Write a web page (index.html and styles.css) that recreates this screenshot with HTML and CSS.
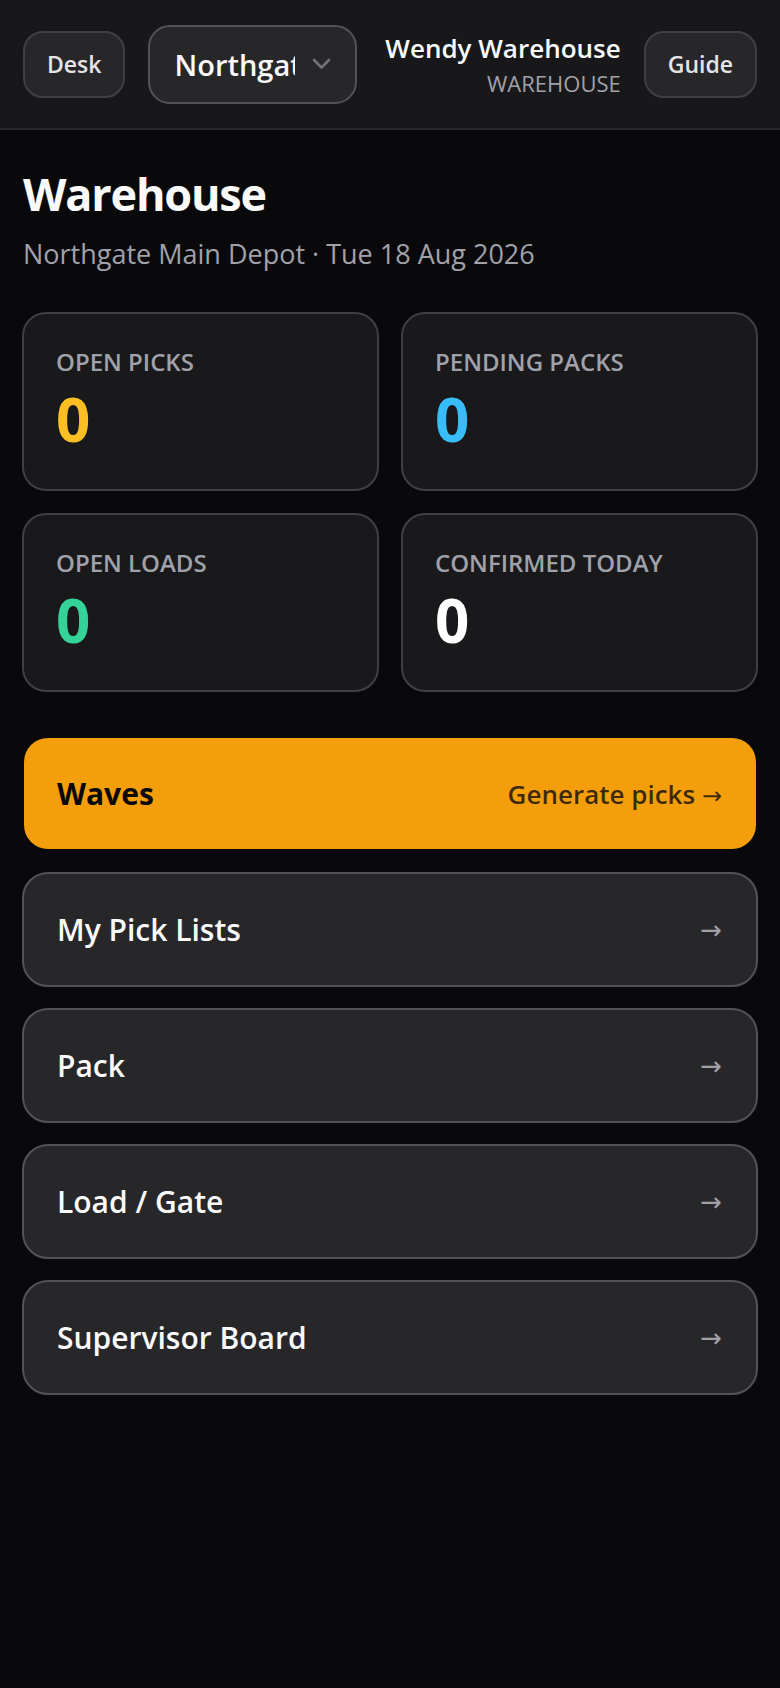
FILE: index.html
```html
<!DOCTYPE html>
<html lang="en">
<head>
<meta charset="utf-8">
<title>Warehouse</title>
<link rel="stylesheet" href="styles.css">
</head>
<body>
<header class="topbar">
  <button class="btn">Desk</button>
  <div class="site-select">
    <span class="site-text">Northgate</span>
    <svg class="chev" width="19" height="12" viewBox="0 0 19 12" fill="none"><path d="M2 2l7.5 7.5L17 2" stroke="#71717a" stroke-width="2.6" stroke-linecap="round" stroke-linejoin="round"/></svg>
  </div>
  <div class="user">
    <div class="user-name">Wendy Warehouse</div>
    <div class="user-role">WAREHOUSE</div>
  </div>
  <button class="btn">Guide</button>
</header>
<main class="page">
  <h1 class="title">Warehouse</h1>
  <p class="subtitle">Northgate Main Depot · Tue 18 Aug 2026</p>
  <section class="stats">
    <div class="stat"><div class="stat-label">OPEN PICKS</div><div class="stat-value amber">0</div></div>
    <div class="stat"><div class="stat-label">PENDING PACKS</div><div class="stat-value sky">0</div></div>
    <div class="stat"><div class="stat-label">OPEN LOADS</div><div class="stat-value green">0</div></div>
    <div class="stat"><div class="stat-label">CONFIRMED TODAY</div><div class="stat-value white">0</div></div>
  </section>
  <nav class="links">
    <a class="link link-primary"><span class="link-title">Waves</span><span class="link-hint">Generate picks <span class="arrow">→</span></span></a>
    <a class="link"><span class="link-title">My Pick Lists</span><span class="link-arrow arrow">→</span></a>
    <a class="link"><span class="link-title">Pack</span><span class="link-arrow arrow">→</span></a>
    <a class="link"><span class="link-title">Load / Gate</span><span class="link-arrow arrow">→</span></a>
    <a class="link"><span class="link-title">Supervisor Board</span><span class="link-arrow arrow">→</span></a>
  </nav>
</main>
</body>
</html>
```
FILE: styles.css
```css
* { box-sizing: border-box; }
html, body { margin: 0; padding: 0; }
body {
  background: #09090b;
  color: #fafafa;
  font-family: "Open Sans", "Noto Sans", sans-serif;
  min-height: 1688px;
}
.topbar {
  height: 130px;
  background: #18181b;
  border-bottom: 2px solid #27272a;
  display: flex;
  align-items: center;
  gap: 23px;
  padding: 0 23px;
}
.btn {
  height: 67px;
  padding: 0 22px;
  background: #27272a;
  border: 2px solid #3f3f46;
  border-radius: 20px;
  color: #e4e4e7;
  font-family: inherit;
  font-size: 23px;
  font-weight: 600;
  flex: none;
}
.site-select {
  width: 209px;
  height: 79px;
  flex: none;
  display: flex;
  align-items: center;
  gap: 17px;
  padding: 0 24px;
  background: #27272a;
  border: 2px solid #52525b;
  border-radius: 22px;
}
.site-text {
  width: 121px;
  overflow: hidden;
  white-space: nowrap;
  font-size: 29px;
  font-weight: 600;
  color: #fafafa;
}
.chev { flex: none; }
.user {
  flex: 1;
  min-width: 0;
  text-align: right;
}
.user-name {
  font-size: 26px;
  line-height: 38px;
  font-weight: 600;
  white-space: nowrap;
}
.user-role {
  font-size: 22px;
  line-height: 32px;
  color: #a1a1aa;
}
.page {
  padding: 32px 22px 0;
}
.title {
  margin: 0;
  padding-left: 1px;
  font-size: 45px;
  line-height: 64px;
  font-weight: 700;
  letter-spacing: -1.2px;
}
.subtitle {
  margin: 8px 0 0;
  padding-left: 1px;
  font-size: 27px;
  line-height: 40px;
  color: #a1a1aa;
}
.stats {
  margin-top: 38px;
  display: grid;
  grid-template-columns: 1fr 1fr;
  gap: 22px;
}
.stat {
  background: #19191c;
  border: 2px solid #3f3f46;
  border-radius: 24px;
  padding: 32px;
  height: 179px;
}
.stat-label {
  font-size: 24px;
  line-height: 32px;
  font-weight: 600;
  color: #a1a1aa;
}
.stat-value {
  margin-top: 5px;
  font-size: 60px;
  line-height: 72px;
  font-weight: 700;
}
.amber { color: #fbbf24; }
.sky { color: #38bdf8; }
.green { color: #34d399; }
.white { color: #ffffff; }
.links {
  margin-top: 44px;
  display: flex;
  flex-direction: column;
  gap: 21px;
}
.link {
  height: 115px;
  display: flex;
  align-items: center;
  justify-content: space-between;
  padding: 0 34px 0 33px;
  background: #27272a;
  border: 2px solid #52525b;
  border-radius: 26px;
  color: #fafafa;
  text-decoration: none;
}
.link-primary {
  background: #f59e0b;
  background-clip: padding-box;
  border-color: transparent;
  color: #09090b;
}
.link-title {
  font-size: 30px;
  font-weight: 600;
}
.link-primary .link-title { font-weight: 700; }
.link-hint {
  font-size: 26px;
  font-weight: 600;
  color: rgba(9, 9, 11, 0.78);
}
.arrow {
  font-family: "DejaVu Sans", sans-serif;
  font-weight: 400;
}
.link-hint .arrow {
  font-size: 24px;
}
.link-arrow {
  font-size: 26px;
  color: #a1a1aa;
}
```
